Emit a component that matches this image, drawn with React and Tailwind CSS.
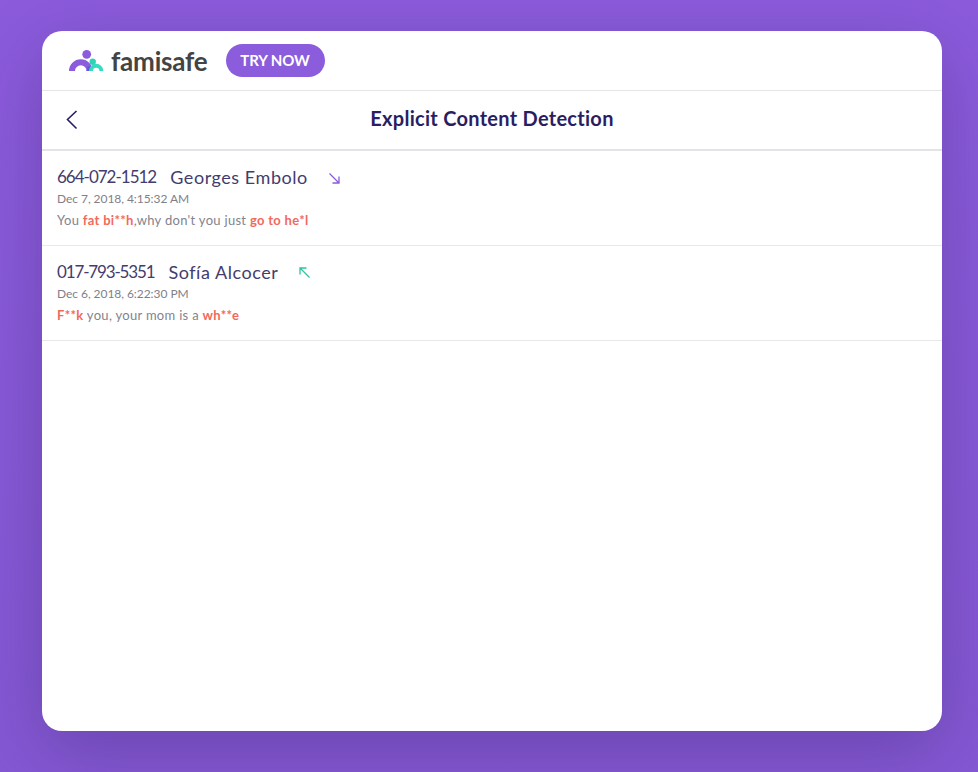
export default function App() {
  const Row = ({ phone, phoneTrack, name, date, arrow, children }) => (
    <div className="h-[95px] border-b border-[#e8e8ec] pl-[15px] pt-[14px]">
      <div className="flex items-center h-[24px] text-[18px] text-[#433c6e] tracking-[0.55px]">
        <span className={phoneTrack}>{phone}</span>
        <span className="ml-[14px]">{name}</span>
        <span className="ml-[20px]">{arrow}</span>
      </div>
      <div className="h-[19px] text-[12px] tracking-[-0.05px] leading-[19px] text-[#7f7f8a]">{date}</div>
      <div className="h-[22px] mt-[1px] text-[13px] leading-[22px] text-[#83838e] tracking-[0.3px]">{children}</div>
    </div>
  );
  const Hot = ({ children }) => <span className="font-bold text-[#f2695c]">{children}</span>;
  return (
    <div className="w-[978px] h-[772px] overflow-hidden pt-[31px] pl-[42px] bg-gradient-to-b from-[#8b5bdc] to-[#8558d4]" style={{ fontFamily: '"Lato", "Noto Sans", sans-serif' }}>
      <div className="w-[900px] h-[700px] rounded-[20px] bg-white overflow-hidden shadow-[0_20px_70px_rgba(40,20,80,0.28)]">
        <div className="h-[60px] border-b border-[#e6e6ea] flex items-center pl-[27px] pb-[1px]">
          <svg width="35" height="24" viewBox="0 0 35 24" className="mt-[2px]">
            <circle cx="17.7" cy="5.3" r="4.4" fill="#8b5cdc" />
            <path d="M3 22 A 8.8 8.8 0 0 1 20.6 22" fill="none" stroke="#8b5cdc" strokeWidth="6" />
            <path d="M17.5 22 A 6 6 0 0 1 19.5 17 A 9 9 0 0 1 23.6 22 Z" fill="#5f5ad8" />
            <circle cx="23.7" cy="12.7" r="3.2" fill="#2fd3b4" />
            <path d="M22 22 A 5.2 5.2 0 0 1 32.4 22" fill="none" stroke="#36dcc0" strokeWidth="4" />
          </svg>
          <span className="ml-[7px] text-[26px] font-bold text-[#444444] tracking-[-0.2px] leading-none mt-[1px]">famisafe</span>
          <button className="ml-[18px] w-[99px] h-[33px] rounded-full bg-[#8b5cdc] text-white text-[15px] font-bold tracking-[-0.1px] flex items-center justify-center">TRY NOW</button>
        </div>
        <div className="relative h-[60px] border-b-2 border-[#e4e4e8] flex items-center justify-center pb-[5px]">
          <svg className="absolute left-[24px] top-[19px]" width="12" height="20" viewBox="0 0 12 20" fill="none">
            <path d="M10.5 1 L1.5 9.5 L10.5 18.5" stroke="#2a1e63" strokeWidth="1.6" />
          </svg>
          <span className="text-[20px] font-bold text-[#2a1e63] tracking-[0.28px]">Explicit Content Detection</span>
        </div>
        <Row
          phone="664-072-1512"
          phoneTrack="text-[17px] tracking-[-1px]"
          name="Georges Embolo"
          date="Dec 7, 2018, 4:15:32 AM"
          arrow={
            <svg width="13" height="13" viewBox="0 0 13 13" fill="none" className="mt-[2px]">
              <path d="M1.5 1.5 L11 11 M11 4.5 V11 H4.5" stroke="#8b5cdc" strokeWidth="1.3" />
            </svg>
          }
        >
          You <Hot>fat bi**h</Hot>,why don't you just <Hot>go to he*l</Hot>
        </Row>
        <Row
          phone="017-793-5351"
          phoneTrack="text-[17px] tracking-[-1.15px]"
          name="Sofía Alcocer"
          date="Dec 6, 2018, 6:22:30 PM"
          arrow={
            <svg width="13" height="13" viewBox="0 0 13 13" fill="none">
              <path d="M11.5 11.5 L2 2 M2 8.5 V2 H8.5" stroke="#2fc39d" strokeWidth="1.3" />
            </svg>
          }
        >
          <Hot>F**k</Hot> you, your mom is a <Hot>wh**e</Hot>
        </Row>
      </div>
    </div>
  );
}
